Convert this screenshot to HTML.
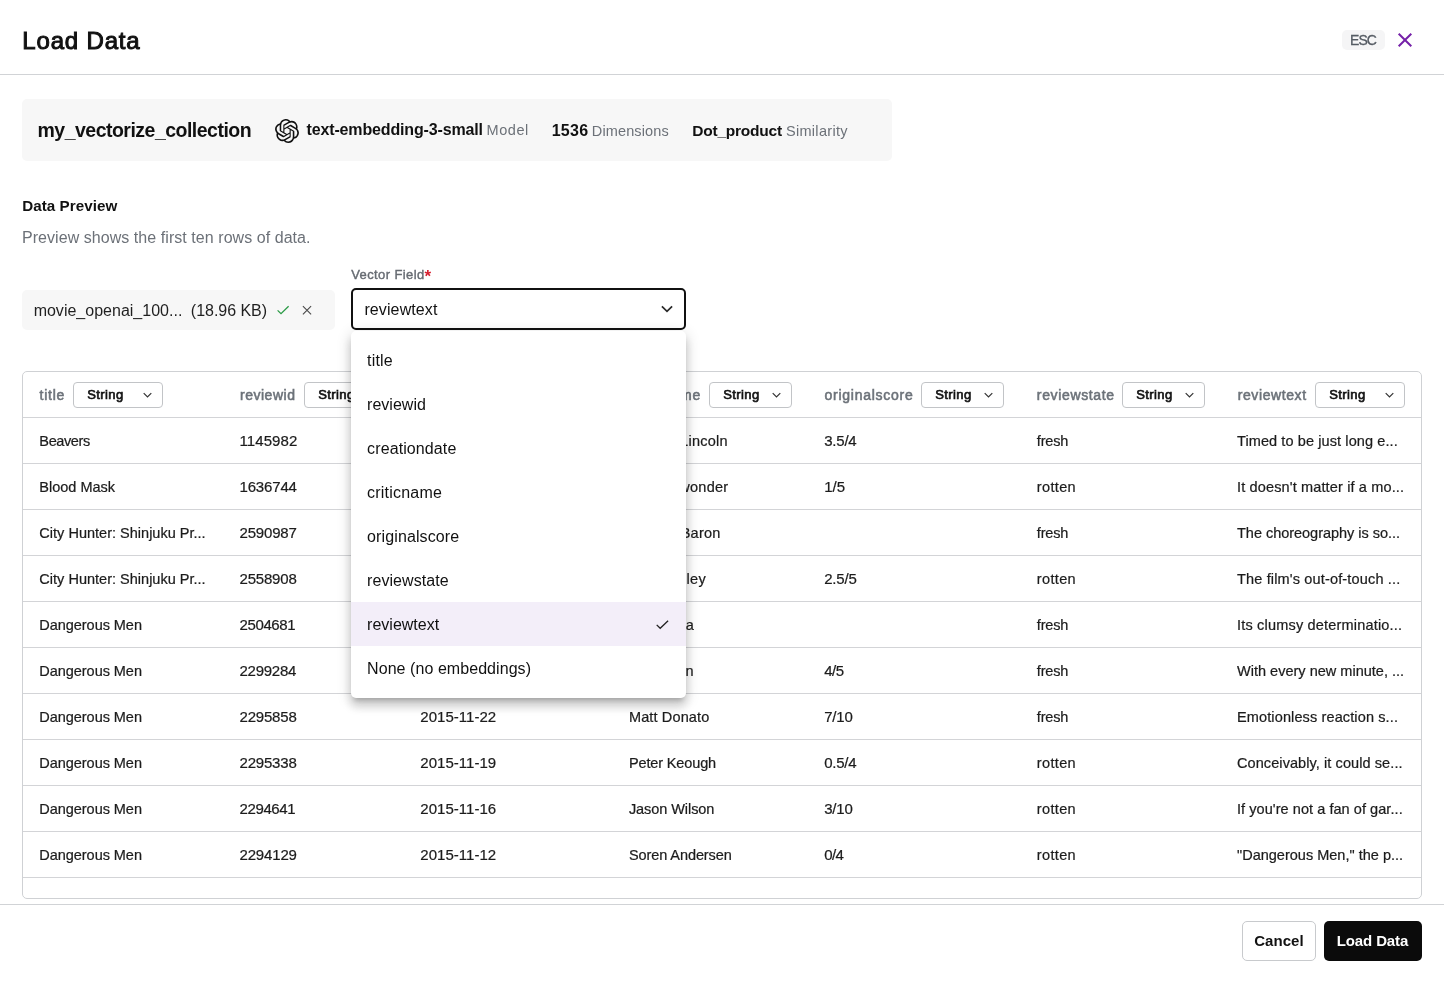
<!DOCTYPE html>
<html lang="en">
<head>
<meta charset="utf-8">
<title>Load Data</title>
<style>
*{box-sizing:border-box;margin:0;padding:0}
html,body{width:1444px;height:983px;overflow:hidden;background:#fff}
body{font-family:"Liberation Sans",sans-serif;color:#111;position:relative}
.abs{position:absolute}
.g{position:absolute;left:0;top:0;width:1444px;height:983px;will-change:transform;pointer-events:none}
.t{position:absolute;white-space:nowrap;line-height:20px}
.hline{position:absolute;left:0;width:1444px;height:1px;background:#d1d3d6}
.esc{position:absolute;left:1342px;top:30px;width:43px;height:20px;border-radius:5px;background:#f5f5f6}
.card{position:absolute;left:22px;top:99px;width:870px;height:62px;background:#f7f7f7;border-radius:5px}
.chip{position:absolute;left:22px;top:290px;width:313px;height:40px;background:#f7f7f7;border-radius:5px}
.sel{position:absolute;left:351px;top:288px;width:335px;height:42px;border:2px solid #111;border-radius:5px;background:#fff}
.tbl{position:absolute;left:22px;top:371px;width:1400px;height:528px;border:1px solid #cfd1d4;border-radius:5px}
.rl{position:absolute;left:23px;width:1398px;height:1px;background:#d3d4d7}
.tsel{position:absolute;top:382px;height:26px;border:1px solid #c2c4c7;border-radius:4px;background:#fff}
.dd{position:absolute;left:351px;top:331px;width:335px;height:367px;background:#fff;border-radius:5px;box-shadow:0 5px 5px -3px rgba(0,0,0,.2),0 8px 10px 1px rgba(0,0,0,.14),0 3px 14px 2px rgba(0,0,0,.12)}
.on{position:absolute;left:351px;top:602px;width:335px;height:44px;background:#f3eef9}
.ftrbg{position:absolute;left:0;top:905px;width:1444px;height:78px;background:#fff}
.cancel{position:absolute;left:1242px;top:921px;width:74px;height:40px;border:1px solid #c8cacd;border-radius:5px;background:#fff}
.load{position:absolute;left:1324px;top:921px;width:98px;height:40px;border-radius:5px;background:#0b0b0b}
</style>
</head>
<body>
<div class="hline" style="top:74px"></div>
<div class="esc"></div>
<svg class="abs" style="left:1397px;top:32px" width="16" height="16" viewBox="0 0 16 16"><path d="M1.7 1.7 L14.3 14.3 M14.3 1.7 L1.7 14.3" stroke="#7521a8" stroke-width="2" fill="none"/></svg>
<div class="g">
<span class="t" id="t0" style="left:22.30px;top:31px;font-size:24px;color:#111;letter-spacing:0.833px;-webkit-text-stroke:1.0px #111;">Load Data</span>
<span class="t" id="t1" style="left:1349.94px;top:30px;font-size:14px;color:#555b63;letter-spacing:-0.882px;-webkit-text-stroke:0.3px #555b63;">ESC</span>
</div>
<div class="card"></div>
<svg class="abs" style="left:275px;top:119px" width="24" height="24" viewBox="0 0 24 24"><path fill="#111" d="M22.2819 9.8211a5.9847 5.9847 0 0 0-.5157-4.9108 6.0462 6.0462 0 0 0-6.5098-2.9A6.0651 6.0651 0 0 0 4.9807 4.1818a5.9847 5.9847 0 0 0-3.9977 2.9 6.0462 6.0462 0 0 0 .7427 7.0966 5.98 5.98 0 0 0 .511 4.9107 6.051 6.051 0 0 0 6.5146 2.9001A5.9847 5.9847 0 0 0 13.2599 24a6.0557 6.0557 0 0 0 5.7718-4.2058 5.9894 5.9894 0 0 0 3.9977-2.9001 6.0557 6.0557 0 0 0-.7475-7.0729zm-9.022 12.6081a4.4755 4.4755 0 0 1-2.8764-1.0408l.1419-.0804 4.7783-2.7582a.7948.7948 0 0 0 .3927-.6813v-6.7369l2.02 1.1686a.071.071 0 0 1 .038.052v5.5826a4.504 4.504 0 0 1-4.4945 4.4944zm-9.6607-4.1254a4.4708 4.4708 0 0 1-.5346-3.0137l.142.0852 4.783 2.7582a.7712.7712 0 0 0 .7806 0l5.8428-3.3685v2.3324a.0804.0804 0 0 1-.0332.0615L9.74 19.9502a4.4992 4.4992 0 0 1-6.1408-1.6464zM2.3408 7.8956a4.485 4.485 0 0 1 2.3655-1.9728V11.6a.7664.7664 0 0 0 .3879.6765l5.8144 3.3543-2.0201 1.1685a.0757.0757 0 0 1-.071 0l-4.8303-2.7865A4.504 4.504 0 0 1 2.3408 7.872zm16.5963 3.8558L13.1038 8.364 15.1192 7.2a.0757.0757 0 0 1 .071 0l4.8303 2.7913a4.4944 4.4944 0 0 1-.6765 8.1042v-5.6772a.79.79 0 0 0-.407-.667zm2.0107-3.0231l-.142-.0852-4.7735-2.7818a.7759.7759 0 0 0-.7854 0L9.409 9.2297V6.8974a.0662.0662 0 0 1 .0284-.0615l4.8303-2.7866a4.4992 4.4992 0 0 1 6.6802 4.66zM8.3065 12.863l-2.02-1.1638a.0804.0804 0 0 1-.038-.0567V6.0742a4.4992 4.4992 0 0 1 7.3757-3.4537l-.142.0805L8.704 5.459a.7948.7948 0 0 0-.3927.6813zm1.0976-2.3654l2.602-1.4998 2.6069 1.4998v2.9994l-2.5974 1.4997-2.6067-1.4997Z"/></svg>
<div class="chip"></div>
<svg class="abs" style="left:276px;top:304px" width="14" height="12" viewBox="0 0 14 12"><path d="M1.6 6.4 L5 9.6 L12.6 2.2" stroke="#2a9a45" stroke-width="1.3" fill="none"/></svg>
<svg class="abs" style="left:301px;top:304px" width="12" height="12" viewBox="0 0 12 12"><path d="M1.9 2.1 L10.1 10.3 M10.1 2.1 L1.9 10.3" stroke="#4a4a4a" stroke-width="1.1" fill="none"/></svg>
<div class="sel"></div>
<svg class="abs" style="left:660px;top:303px" width="14" height="12" viewBox="0 0 14 12"><path d="M1.9 3.3 L7 8.4 L12.1 3.3" stroke="#2a2a2a" stroke-width="1.7" fill="none"/></svg>
<div class="g">
<span class="t" id="t2" style="left:37.51px;top:120px;font-size:19.5px;font-weight:700;color:#111;letter-spacing:-0.515px;">my_vectorize_collection</span>
<span class="t" id="t3" style="left:306.57px;top:120px;font-size:16px;font-weight:700;color:#111;letter-spacing:-0.150px;">text-embedding-3-small</span>
<span class="t" id="t4" style="left:486.48px;top:120px;font-size:14.5px;color:#6c7178;letter-spacing:0.583px;">Model</span>
<span class="t" id="t5" style="left:551.69px;top:121px;font-size:16px;font-weight:700;color:#111;letter-spacing:0.255px;">1536</span>
<span class="t" id="t6" style="left:591.79px;top:121px;font-size:14.5px;color:#6c7178;letter-spacing:0.130px;">Dimensions</span>
<span class="t" id="t7" style="left:692.31px;top:121px;font-size:15.5px;font-weight:700;color:#111;letter-spacing:-0.230px;">Dot_product</span>
<span class="t" id="t8" style="left:785.92px;top:121px;font-size:14.5px;color:#6c7178;letter-spacing:0.318px;">Similarity</span>
<span class="t" id="t9" style="left:22.16px;top:196px;font-size:15.2px;font-weight:700;color:#111;letter-spacing:0.059px;">Data Preview</span>
<span class="t" id="t10" style="left:21.95px;top:228px;font-size:16px;color:#6c7178;letter-spacing:0.056px;">Preview shows the first ten rows of data.</span>
<span class="t" id="t11" style="left:351.18px;top:265px;font-size:13px;color:#666b72;letter-spacing:0.396px;-webkit-text-stroke:0.4px #666b72;">Vector Field</span>
<span class="t" id="t12" style="left:424.60px;top:267px;font-size:17px;font-weight:700;color:#d61f2e;">*</span>
<span class="t" id="t13" style="left:33.63px;top:301px;font-size:16px;color:#1f1f1f;letter-spacing:0.010px;">movie_openai_100...</span>
<span class="t" id="t14" style="left:190.87px;top:301px;font-size:16px;color:#1f1f1f;letter-spacing:-0.030px;">(18.96 KB)</span>
<span class="t" id="t15" style="left:364.40px;top:300px;font-size:16px;color:#111;letter-spacing:0.113px;">reviewtext</span>
</div>
<div class="tbl"></div>
<div class="rl" style="top:417px"></div>
<div class="rl" style="top:463px"></div>
<div class="rl" style="top:509px"></div>
<div class="rl" style="top:555px"></div>
<div class="rl" style="top:601px"></div>
<div class="rl" style="top:647px"></div>
<div class="rl" style="top:693px"></div>
<div class="rl" style="top:739px"></div>
<div class="rl" style="top:785px"></div>
<div class="rl" style="top:831px"></div>
<div class="rl" style="top:877px"></div>
<div class="tsel" style="left:73px;width:90px"></div>
<svg class="abs" style="left:141.9px;top:390px" width="11" height="10" viewBox="0 0 11 10"><path d="M1.7 3.2 L5.5 7 L9.3 3.2" stroke="#333" stroke-width="1.2" fill="none"/></svg>
<div class="tsel" style="left:304px;width:83px"></div>
<svg class="abs" style="left:365.9px;top:390px" width="11" height="10" viewBox="0 0 11 10"><path d="M1.7 3.2 L5.5 7 L9.3 3.2" stroke="#333" stroke-width="1.2" fill="none"/></svg>
<div class="tsel" style="left:513px;width:83px"></div>
<svg class="abs" style="left:574.9px;top:390px" width="11" height="10" viewBox="0 0 11 10"><path d="M1.7 3.2 L5.5 7 L9.3 3.2" stroke="#333" stroke-width="1.2" fill="none"/></svg>
<div class="tsel" style="left:709px;width:83px"></div>
<svg class="abs" style="left:770.9px;top:390px" width="11" height="10" viewBox="0 0 11 10"><path d="M1.7 3.2 L5.5 7 L9.3 3.2" stroke="#333" stroke-width="1.2" fill="none"/></svg>
<div class="tsel" style="left:921px;width:83px"></div>
<svg class="abs" style="left:982.9px;top:390px" width="11" height="10" viewBox="0 0 11 10"><path d="M1.7 3.2 L5.5 7 L9.3 3.2" stroke="#333" stroke-width="1.2" fill="none"/></svg>
<div class="tsel" style="left:1122px;width:83px"></div>
<svg class="abs" style="left:1183.9px;top:390px" width="11" height="10" viewBox="0 0 11 10"><path d="M1.7 3.2 L5.5 7 L9.3 3.2" stroke="#333" stroke-width="1.2" fill="none"/></svg>
<div class="tsel" style="left:1315px;width:90px"></div>
<svg class="abs" style="left:1383.9px;top:390px" width="11" height="10" viewBox="0 0 11 10"><path d="M1.7 3.2 L5.5 7 L9.3 3.2" stroke="#333" stroke-width="1.2" fill="none"/></svg>
<div class="g">
<span class="t" id="t18" style="left:39.62px;top:385px;font-size:14px;color:#6c7279;letter-spacing:0.745px;-webkit-text-stroke:0.55px #6c7279;">title</span>
<span class="t" id="t19" style="left:87.18px;top:385px;font-size:13px;color:#111;letter-spacing:0.421px;-webkit-text-stroke:0.65px #111;">String</span>
<span class="t" id="t20" style="left:240.03px;top:385px;font-size:14px;color:#6c7279;letter-spacing:0.509px;-webkit-text-stroke:0.55px #6c7279;">reviewid</span>
<span class="t" id="t21" style="left:318.18px;top:385px;font-size:13px;color:#111;letter-spacing:0.421px;-webkit-text-stroke:0.65px #111;">String</span>
<span class="t" id="t22" style="left:420.87px;top:385px;font-size:14px;color:#6c7279;letter-spacing:0.593px;-webkit-text-stroke:0.55px #6c7279;">creationdate</span>
<span class="t" id="t23" style="left:527.18px;top:385px;font-size:13px;color:#111;letter-spacing:0.421px;-webkit-text-stroke:0.65px #111;">String</span>
<span class="t" id="t24" style="left:629.87px;top:385px;font-size:14px;color:#6c7279;letter-spacing:0.738px;-webkit-text-stroke:0.55px #6c7279;">criticname</span>
<span class="t" id="t25" style="left:723.18px;top:385px;font-size:13px;color:#111;letter-spacing:0.421px;-webkit-text-stroke:0.65px #111;">String</span>
<span class="t" id="t26" style="left:824.48px;top:385px;font-size:14px;color:#6c7279;letter-spacing:0.742px;-webkit-text-stroke:0.55px #6c7279;">originalscore</span>
<span class="t" id="t27" style="left:935.18px;top:385px;font-size:13px;color:#111;letter-spacing:0.421px;-webkit-text-stroke:0.65px #111;">String</span>
<span class="t" id="t28" style="left:1036.87px;top:385px;font-size:14px;color:#6c7279;letter-spacing:0.636px;-webkit-text-stroke:0.55px #6c7279;">reviewstate</span>
<span class="t" id="t29" style="left:1136.18px;top:385px;font-size:13px;color:#111;letter-spacing:0.421px;-webkit-text-stroke:0.65px #111;">String</span>
<span class="t" id="t30" style="left:1237.66px;top:385px;font-size:14px;color:#6c7279;letter-spacing:0.603px;-webkit-text-stroke:0.55px #6c7279;">reviewtext</span>
<span class="t" id="t31" style="left:1329.18px;top:385px;font-size:13px;color:#111;letter-spacing:0.421px;-webkit-text-stroke:0.65px #111;">String</span>
<span class="t" id="t32" style="left:39.35px;top:431px;font-size:14.5px;color:#1c1c1c;letter-spacing:-0.386px;-webkit-text-stroke:0.22px #1c1c1c;">Beavers</span>
<span class="t" id="t33" style="left:239.49px;top:431px;font-size:15px;color:#1c1c1c;letter-spacing:0.091px;-webkit-text-stroke:0.22px #1c1c1c;">1145982</span>
<span class="t" id="t34" style="left:624.12px;top:431px;font-size:14.5px;color:#1c1c1c;letter-spacing:0.250px;-webkit-text-stroke:0.22px #1c1c1c;">Ross A. Lincoln</span>
<span class="t" id="t35" style="left:824.13px;top:431px;font-size:15px;color:#1c1c1c;letter-spacing:-0.195px;-webkit-text-stroke:0.22px #1c1c1c;">3.5/4</span>
<span class="t" id="t36" style="left:1036.82px;top:431px;font-size:14.5px;color:#1c1c1c;letter-spacing:-0.178px;-webkit-text-stroke:0.22px #1c1c1c;">fresh</span>
<span class="t" id="t37" style="left:1237.00px;top:431px;font-size:14.5px;color:#1c1c1c;letter-spacing:0.098px;-webkit-text-stroke:0.22px #1c1c1c;">Timed to be just long e...</span>
<span class="t" id="t38" style="left:39.35px;top:477px;font-size:14.5px;color:#1c1c1c;letter-spacing:-0.005px;-webkit-text-stroke:0.22px #1c1c1c;">Blood Mask</span>
<span class="t" id="t39" style="left:239.49px;top:477px;font-size:15px;color:#1c1c1c;letter-spacing:-0.163px;-webkit-text-stroke:0.22px #1c1c1c;">1636744</span>
<span class="t" id="t40" style="left:646.66px;top:477px;font-size:14.5px;color:#1c1c1c;letter-spacing:0.250px;-webkit-text-stroke:0.22px #1c1c1c;">Film wonder</span>
<span class="t" id="t41" style="left:824.13px;top:477px;font-size:15px;color:#1c1c1c;letter-spacing:0.055px;-webkit-text-stroke:0.22px #1c1c1c;">1/5</span>
<span class="t" id="t42" style="left:1036.82px;top:477px;font-size:14.5px;color:#1c1c1c;letter-spacing:0.345px;-webkit-text-stroke:0.22px #1c1c1c;">rotten</span>
<span class="t" id="t43" style="left:1237.00px;top:477px;font-size:14.5px;color:#1c1c1c;letter-spacing:0.145px;-webkit-text-stroke:0.22px #1c1c1c;">It doesn&#x27;t matter if a mo...</span>
<span class="t" id="t44" style="left:39.35px;top:523px;font-size:14.5px;color:#1c1c1c;letter-spacing:0.011px;-webkit-text-stroke:0.22px #1c1c1c;">City Hunter: Shinjuku Pr...</span>
<span class="t" id="t45" style="left:239.49px;top:523px;font-size:15px;color:#1c1c1c;letter-spacing:-0.172px;-webkit-text-stroke:0.22px #1c1c1c;">2590987</span>
<span class="t" id="t46" style="left:624.12px;top:523px;font-size:14.5px;color:#1c1c1c;letter-spacing:0.250px;-webkit-text-stroke:0.22px #1c1c1c;">Reuben Baron</span>
<span class="t" id="t47" style="left:1036.82px;top:523px;font-size:14.5px;color:#1c1c1c;letter-spacing:-0.178px;-webkit-text-stroke:0.22px #1c1c1c;">fresh</span>
<span class="t" id="t48" style="left:1237.00px;top:523px;font-size:14.5px;color:#1c1c1c;letter-spacing:-0.023px;-webkit-text-stroke:0.22px #1c1c1c;">The choreography is so...</span>
<span class="t" id="t49" style="left:39.35px;top:569px;font-size:14.5px;color:#1c1c1c;letter-spacing:0.011px;-webkit-text-stroke:0.22px #1c1c1c;">City Hunter: Shinjuku Pr...</span>
<span class="t" id="t50" style="left:239.49px;top:569px;font-size:15px;color:#1c1c1c;letter-spacing:-0.184px;-webkit-text-stroke:0.22px #1c1c1c;">2558908</span>
<span class="t" id="t51" style="left:627.41px;top:569px;font-size:14.5px;color:#1c1c1c;letter-spacing:0.250px;-webkit-text-stroke:0.22px #1c1c1c;">Matt Schley</span>
<span class="t" id="t52" style="left:824.13px;top:569px;font-size:15px;color:#1c1c1c;letter-spacing:-0.187px;-webkit-text-stroke:0.22px #1c1c1c;">2.5/5</span>
<span class="t" id="t53" style="left:1036.82px;top:569px;font-size:14.5px;color:#1c1c1c;letter-spacing:0.345px;-webkit-text-stroke:0.22px #1c1c1c;">rotten</span>
<span class="t" id="t54" style="left:1237.00px;top:569px;font-size:14.5px;color:#1c1c1c;letter-spacing:0.157px;-webkit-text-stroke:0.22px #1c1c1c;">The film&#x27;s out-of-touch ...</span>
<span class="t" id="t55" style="left:39.35px;top:615px;font-size:14.5px;color:#1c1c1c;letter-spacing:-0.047px;-webkit-text-stroke:0.22px #1c1c1c;">Dangerous Men</span>
<span class="t" id="t56" style="left:239.49px;top:615px;font-size:15px;color:#1c1c1c;letter-spacing:-0.376px;-webkit-text-stroke:0.22px #1c1c1c;">2504681</span>
<span class="t" id="t57" style="left:624.21px;top:615px;font-size:14.5px;color:#1c1c1c;letter-spacing:0.250px;-webkit-text-stroke:0.22px #1c1c1c;">Pat Padua</span>
<span class="t" id="t58" style="left:1036.82px;top:615px;font-size:14.5px;color:#1c1c1c;letter-spacing:-0.178px;-webkit-text-stroke:0.22px #1c1c1c;">fresh</span>
<span class="t" id="t59" style="left:1237.00px;top:615px;font-size:14.5px;color:#1c1c1c;letter-spacing:0.187px;-webkit-text-stroke:0.22px #1c1c1c;">Its clumsy determinatio...</span>
<span class="t" id="t60" style="left:39.35px;top:661px;font-size:14.5px;color:#1c1c1c;letter-spacing:-0.047px;-webkit-text-stroke:0.22px #1c1c1c;">Dangerous Men</span>
<span class="t" id="t61" style="left:239.49px;top:661px;font-size:15px;color:#1c1c1c;letter-spacing:-0.250px;-webkit-text-stroke:0.22px #1c1c1c;">2299284</span>
<span class="t" id="t62" style="left:604.52px;top:661px;font-size:14.5px;color:#1c1c1c;letter-spacing:0.250px;-webkit-text-stroke:0.22px #1c1c1c;">Matt Brunson</span>
<span class="t" id="t63" style="left:824.13px;top:661px;font-size:15px;color:#1c1c1c;letter-spacing:-0.427px;-webkit-text-stroke:0.22px #1c1c1c;">4/5</span>
<span class="t" id="t64" style="left:1036.82px;top:661px;font-size:14.5px;color:#1c1c1c;letter-spacing:-0.178px;-webkit-text-stroke:0.22px #1c1c1c;">fresh</span>
<span class="t" id="t65" style="left:1237.00px;top:661px;font-size:14.5px;color:#1c1c1c;letter-spacing:0.011px;-webkit-text-stroke:0.22px #1c1c1c;">With every new minute, ...</span>
<span class="t" id="t66" style="left:39.35px;top:707px;font-size:14.5px;color:#1c1c1c;letter-spacing:-0.047px;-webkit-text-stroke:0.22px #1c1c1c;">Dangerous Men</span>
<span class="t" id="t67" style="left:239.49px;top:707px;font-size:15px;color:#1c1c1c;letter-spacing:-0.184px;-webkit-text-stroke:0.22px #1c1c1c;">2295858</span>
<span class="t" id="t68" style="left:420.36px;top:707px;font-size:15px;color:#1c1c1c;letter-spacing:0.021px;-webkit-text-stroke:0.22px #1c1c1c;">2015-11-22</span>
<span class="t" id="t69" style="left:628.92px;top:707px;font-size:14.5px;color:#1c1c1c;letter-spacing:0.142px;-webkit-text-stroke:0.22px #1c1c1c;">Matt Donato</span>
<span class="t" id="t70" style="left:824.13px;top:707px;font-size:15px;color:#1c1c1c;letter-spacing:-0.162px;-webkit-text-stroke:0.22px #1c1c1c;">7/10</span>
<span class="t" id="t71" style="left:1036.82px;top:707px;font-size:14.5px;color:#1c1c1c;letter-spacing:-0.178px;-webkit-text-stroke:0.22px #1c1c1c;">fresh</span>
<span class="t" id="t72" style="left:1237.00px;top:707px;font-size:14.5px;color:#1c1c1c;letter-spacing:0.125px;-webkit-text-stroke:0.22px #1c1c1c;">Emotionless reaction s...</span>
<span class="t" id="t73" style="left:39.35px;top:753px;font-size:14.5px;color:#1c1c1c;letter-spacing:-0.047px;-webkit-text-stroke:0.22px #1c1c1c;">Dangerous Men</span>
<span class="t" id="t74" style="left:239.49px;top:753px;font-size:15px;color:#1c1c1c;letter-spacing:-0.184px;-webkit-text-stroke:0.22px #1c1c1c;">2295338</span>
<span class="t" id="t75" style="left:420.36px;top:753px;font-size:15px;color:#1c1c1c;letter-spacing:0.026px;-webkit-text-stroke:0.22px #1c1c1c;">2015-11-19</span>
<span class="t" id="t76" style="left:628.92px;top:753px;font-size:14.5px;color:#1c1c1c;letter-spacing:-0.127px;-webkit-text-stroke:0.22px #1c1c1c;">Peter Keough</span>
<span class="t" id="t77" style="left:824.13px;top:753px;font-size:15px;color:#1c1c1c;letter-spacing:-0.208px;-webkit-text-stroke:0.22px #1c1c1c;">0.5/4</span>
<span class="t" id="t78" style="left:1036.82px;top:753px;font-size:14.5px;color:#1c1c1c;letter-spacing:0.345px;-webkit-text-stroke:0.22px #1c1c1c;">rotten</span>
<span class="t" id="t79" style="left:1237.00px;top:753px;font-size:14.5px;color:#1c1c1c;letter-spacing:0.084px;-webkit-text-stroke:0.22px #1c1c1c;">Conceivably, it could se...</span>
<span class="t" id="t80" style="left:39.35px;top:799px;font-size:14.5px;color:#1c1c1c;letter-spacing:-0.047px;-webkit-text-stroke:0.22px #1c1c1c;">Dangerous Men</span>
<span class="t" id="t81" style="left:239.49px;top:799px;font-size:15px;color:#1c1c1c;letter-spacing:-0.376px;-webkit-text-stroke:0.22px #1c1c1c;">2294641</span>
<span class="t" id="t82" style="left:420.36px;top:799px;font-size:15px;color:#1c1c1c;letter-spacing:0.026px;-webkit-text-stroke:0.22px #1c1c1c;">2015-11-16</span>
<span class="t" id="t83" style="left:628.92px;top:799px;font-size:14.5px;color:#1c1c1c;letter-spacing:-0.064px;-webkit-text-stroke:0.22px #1c1c1c;">Jason Wilson</span>
<span class="t" id="t84" style="left:824.13px;top:799px;font-size:15px;color:#1c1c1c;letter-spacing:-0.153px;-webkit-text-stroke:0.22px #1c1c1c;">3/10</span>
<span class="t" id="t85" style="left:1036.82px;top:799px;font-size:14.5px;color:#1c1c1c;letter-spacing:0.345px;-webkit-text-stroke:0.22px #1c1c1c;">rotten</span>
<span class="t" id="t86" style="left:1237.00px;top:799px;font-size:14.5px;color:#1c1c1c;letter-spacing:0.060px;-webkit-text-stroke:0.22px #1c1c1c;">If you&#x27;re not a fan of gar...</span>
<span class="t" id="t87" style="left:39.35px;top:845px;font-size:14.5px;color:#1c1c1c;letter-spacing:-0.047px;-webkit-text-stroke:0.22px #1c1c1c;">Dangerous Men</span>
<span class="t" id="t88" style="left:239.49px;top:845px;font-size:15px;color:#1c1c1c;letter-spacing:-0.162px;-webkit-text-stroke:0.22px #1c1c1c;">2294129</span>
<span class="t" id="t89" style="left:420.36px;top:845px;font-size:15px;color:#1c1c1c;letter-spacing:0.021px;-webkit-text-stroke:0.22px #1c1c1c;">2015-11-12</span>
<span class="t" id="t90" style="left:628.92px;top:845px;font-size:14.5px;color:#1c1c1c;letter-spacing:-0.082px;-webkit-text-stroke:0.22px #1c1c1c;">Soren Andersen</span>
<span class="t" id="t91" style="left:824.13px;top:845px;font-size:15px;color:#1c1c1c;letter-spacing:-0.527px;-webkit-text-stroke:0.22px #1c1c1c;">0/4</span>
<span class="t" id="t92" style="left:1036.82px;top:845px;font-size:14.5px;color:#1c1c1c;letter-spacing:0.345px;-webkit-text-stroke:0.22px #1c1c1c;">rotten</span>
<span class="t" id="t93" style="left:1237.00px;top:845px;font-size:14.5px;color:#1c1c1c;letter-spacing:0.008px;-webkit-text-stroke:0.22px #1c1c1c;">&quot;Dangerous Men,&quot; the p...</span>
</div>
<div class="dd"></div><div class="on"></div>
<svg class="abs" style="left:655px;top:618px" width="15" height="13" viewBox="0 0 15 13"><path d="M1.7 6.9 L5.2 10.3 L13.1 2.8" stroke="#222" stroke-width="1.3" fill="none"/></svg>
<div class="g">
<span class="t" id="t94" style="left:367.10px;top:351px;font-size:16px;color:#111;letter-spacing:0.172px;">title</span>
<span class="t" id="t95" style="left:367.10px;top:395px;font-size:16px;color:#111;letter-spacing:0.018px;">reviewid</span>
<span class="t" id="t96" style="left:367.10px;top:439px;font-size:16px;color:#111;letter-spacing:0.104px;">creationdate</span>
<span class="t" id="t97" style="left:367.10px;top:483px;font-size:16px;color:#111;letter-spacing:0.211px;">criticname</span>
<span class="t" id="t98" style="left:367.10px;top:527px;font-size:16px;color:#111;letter-spacing:0.114px;">originalscore</span>
<span class="t" id="t99" style="left:367.10px;top:571px;font-size:16px;color:#111;letter-spacing:0.059px;">reviewstate</span>
<span class="t" id="t100" style="left:367.10px;top:615px;font-size:16px;color:#111;letter-spacing:0.007px;">reviewtext</span>
<span class="t" id="t101" style="left:367.10px;top:659px;font-size:16px;color:#111;letter-spacing:0.059px;">None (no embeddings)</span>
</div>
<div class="ftrbg"></div><div class="hline" style="top:904px"></div>
<div class="cancel"></div><div class="load"></div>
<div class="g">
<span class="t" id="t16" style="left:1254.13px;top:931px;font-size:15px;font-weight:700;color:#111;letter-spacing:0.058px;">Cancel</span>
<span class="t" id="t17" style="left:1336.74px;top:931px;font-size:15px;font-weight:700;color:#fff;letter-spacing:-0.120px;">Load Data</span>
</div>
</body>
</html>
